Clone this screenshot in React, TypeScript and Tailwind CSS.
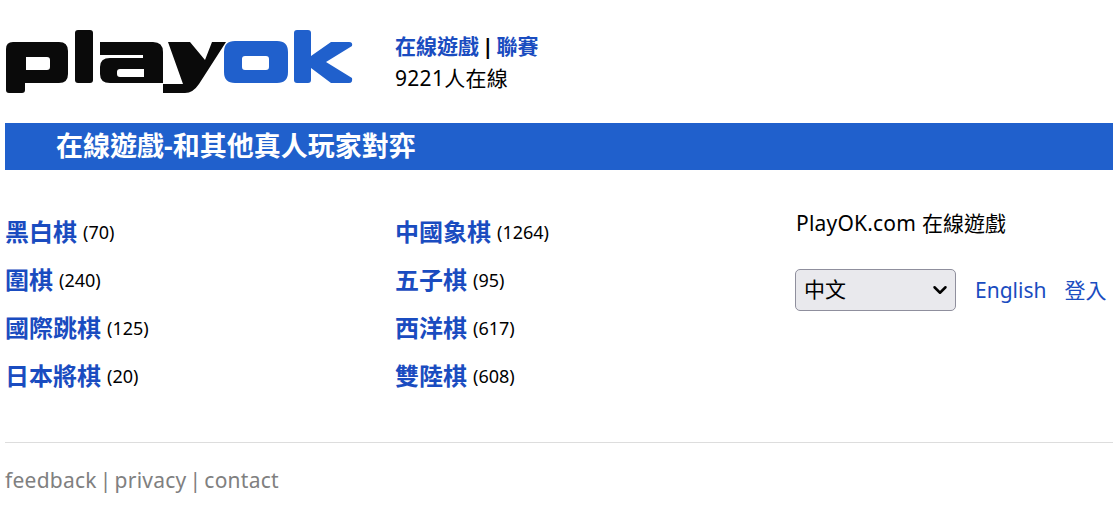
import React from 'react';
import { ChevronDown } from 'lucide-react';

const font = { fontFamily: '"Noto Sans", "Noto Sans CJK TC", sans-serif' };

const leftGames = [
  ['黑白棋', '70'],
  ['圍棋', '240'],
  ['國際跳棋', '125'],
  ['日本將棋', '20'],
];

const rightGames = [
  ['中國象棋', '1264'],
  ['五子棋', '95'],
  ['西洋棋', '617'],
  ['雙陸棋', '608'],
];

// logo is a picture in the original, so it is a drawing here too
function Logo() {
  return (
    <svg width="350" height="68" viewBox="5 28 350 68" className="blur-[0.4px]">
      <g fill="#0a0a0a" fillRule="evenodd">
        <path d="M6 49Q6 42 13 42H59Q68 42 68 51V74Q68 83 59 83H25V90Q25 93 22 93H9Q6 93 6 90ZM26 57V70H47Q50 70 50 67V60Q50 57 47 57Z" />
        <rect x="75" y="30" width="18" height="53" rx="3" />
        <path d="M100 42H153Q163 42 163 52V83H110Q100 83 100 74V67Q100 58 110 58H143V55H100ZM120 69Q117 69 117 72V74Q117 77 120 77H144V69Z" />
        <path d="M168 42H190L205 60L212 42H226L199 84Q193 93 185 93H163V84H183Z" />
      </g>
      <g fill="#2060cc" fillRule="evenodd">
        <path d="M235 41H277Q288 41 288 52V72Q288 83 277 83H235Q224 83 224 72V52Q224 41 235 41ZM245 56Q242 56 242 59V67Q242 70 245 70H266Q269 70 269 67V59Q269 56 266 56Z" />
        <rect x="294" y="30" width="17" height="53" rx="3" />
        <path d="M311 56L331 42H349Q353 42 352 46L326 62L352 78Q353 83 349 83H331L311 68Z" />
      </g>
    </svg>
  );
}

function GameRow({ name, count }: { name: string; count: string }) {
  return (
    <div className="h-12 flex items-center whitespace-nowrap">
      <a href="#" className="text-[24px] font-bold text-[#1a4cc0]">{name}</a>
      <span className="ml-[6px] text-[18px] text-black">({count})</span>
    </div>
  );
}

export default function App() {
  return (
    <div className="w-[1113px] h-[507px] overflow-hidden bg-white pl-[5px] text-black" style={font}>
      {/* Header */}
      <div className="flex h-[123px]">
        <div className="w-[390px] pt-[28px] shrink-0">
          <Logo />
        </div>
        <div className="pt-[31px] text-[21px] leading-[31px]">
          <div className="whitespace-nowrap [word-spacing:-2.5px]">
            <a href="#" className="font-bold text-[#1a4cc0]">在線遊戲</a>
            <span className="font-bold"> | </span>
            <a href="#" className="font-bold text-[#1a4cc0]">聯賽</a>
          </div>
          <div className="whitespace-nowrap tracking-[0.3px] mt-px">9221人在線</div>
        </div>
      </div>

      {/* Title bar */}
      <div className="h-[47px] bg-[#2060cc] pl-[51px] flex items-center">
        <h1 className="text-[27px] font-bold text-white whitespace-nowrap">在線遊戲-和其他真人玩家對弈</h1>
      </div>

      {/* Games */}
      <div className="flex pt-[38px] h-[273px] border-b border-[#dddddd] box-border">
        <div className="w-[390px] shrink-0">
          {leftGames.map(([n, c]) => <GameRow key={n} name={n} count={c} />)}
        </div>
        <div className="w-[400px] shrink-0">
          {rightGames.map(([n, c]) => <GameRow key={n} name={n} count={c} />)}
        </div>
        <div>
          <div className="h-[32px] flex items-center whitespace-nowrap text-[21px] pl-px">
            <span className="tracking-[0.2px]">PlayOK.com</span>
            <span className="ml-[6px]">在線遊戲</span>
          </div>
          <div className="flex items-center mt-[29px] whitespace-nowrap">
            <div className="relative w-[161px] h-[42px]">
              <select className="w-full h-full appearance-none rounded-[5px] border border-[#8f8f9d] bg-[#e9e9ed] pl-[8px] text-[21px] text-black">
                <option>中文</option>
              </select>
              <ChevronDown className="absolute right-[5px] top-[10px] w-[22px] h-[22px] pointer-events-none" strokeWidth={2.7} />
            </div>
            <a href="#" className="ml-[19px] pt-[2px] text-[21px] text-[#1a4cc0]">English</a>
            <a href="#" className="ml-[18px] pt-[2px] text-[21px] text-[#1a4cc0]">登入</a>
          </div>
        </div>
      </div>

      {/* Footer */}
      <div className="pt-[21px] text-[21px] leading-[33px] text-[#808080] whitespace-nowrap tracking-[0.25px] [word-spacing:-2.75px]">
        <a href="#">feedback</a> | <a href="#">privacy</a> | <a href="#">contact</a>
      </div>
    </div>
  );
}
